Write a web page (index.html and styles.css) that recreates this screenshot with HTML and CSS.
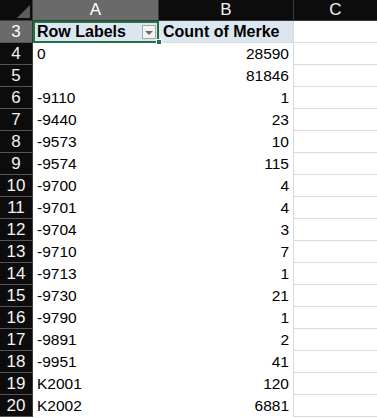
FILE: index.html
```
<!DOCTYPE html>
<html>
<head>
<meta charset="utf-8">
<link rel="stylesheet" href="styles.css">
</head>
<body>
<div class="sheet">
  <div class="corner"><span class="tri"></span></div>
  <div class="colhead sel">A</div>
  <div class="colhead">B</div>
  <div class="colhead last">C</div>

  <div class="rowhead sel">3</div>
  <div class="cell hdr a active">Row Labels<span class="dd"><span class="arrow"></span></span><span class="handle"></span></div>
  <div class="cell hdr b">Count of Merke</div>
  <div class="cell c"></div>

  <div class="rowhead">4</div><div class="cell a">0</div><div class="cell b num">28590</div><div class="cell c"></div>
  <div class="rowhead">5</div><div class="cell a"></div><div class="cell b num">81846</div><div class="cell c"></div>
  <div class="rowhead">6</div><div class="cell a">-9110</div><div class="cell b num">1</div><div class="cell c"></div>
  <div class="rowhead">7</div><div class="cell a">-9440</div><div class="cell b num">23</div><div class="cell c"></div>
  <div class="rowhead">8</div><div class="cell a">-9573</div><div class="cell b num">10</div><div class="cell c"></div>
  <div class="rowhead">9</div><div class="cell a">-9574</div><div class="cell b num">115</div><div class="cell c"></div>
  <div class="rowhead">10</div><div class="cell a">-9700</div><div class="cell b num">4</div><div class="cell c"></div>
  <div class="rowhead">11</div><div class="cell a">-9701</div><div class="cell b num">4</div><div class="cell c"></div>
  <div class="rowhead">12</div><div class="cell a">-9704</div><div class="cell b num">3</div><div class="cell c"></div>
  <div class="rowhead">13</div><div class="cell a">-9710</div><div class="cell b num">7</div><div class="cell c"></div>
  <div class="rowhead">14</div><div class="cell a">-9713</div><div class="cell b num">1</div><div class="cell c"></div>
  <div class="rowhead">15</div><div class="cell a">-9730</div><div class="cell b num">21</div><div class="cell c"></div>
  <div class="rowhead">16</div><div class="cell a">-9790</div><div class="cell b num">1</div><div class="cell c"></div>
  <div class="rowhead">17</div><div class="cell a">-9891</div><div class="cell b num">2</div><div class="cell c"></div>
  <div class="rowhead">18</div><div class="cell a">-9951</div><div class="cell b num">41</div><div class="cell c"></div>
  <div class="rowhead">19</div><div class="cell a">K2001</div><div class="cell b num">120</div><div class="cell c"></div>
  <div class="rowhead">20</div><div class="cell a">K2002</div><div class="cell b num">6881</div><div class="cell c"></div>
</div>
</body>
</html>
```
FILE: styles.css
```
html, body {
  margin: 0;
  padding: 0;
  background: #ffffff;
}
.sheet {
  display: grid;
  grid-template-columns: 33px 126px 135px 1fr;
  grid-template-rows: 21px;
  grid-auto-rows: 22px;
  font-family: "Liberation Sans", Arial, sans-serif;
  font-size: 15.5px;
  color: #000;
  width: 377px;
  overflow: hidden;
}
.sheet > div {
  box-sizing: border-box;
}
.corner {
  background: #0c0c0c;
  border-right: 1px solid #3a3a3a;
  border-bottom: 1px solid #3a3a3a;
  position: relative;
}
.tri {
  position: absolute;
  right: 2px;
  bottom: 2px;
  width: 0;
  height: 0;
  border-left: 13px solid transparent;
  border-bottom: 13px solid #5c5c5c;
}
.colhead {
  background: #0c0c0c;
  color: #f2f2f2;
  border-right: 1px solid #3a3a3a;
  border-bottom: 1px solid #3a3a3a;
  display: flex;
  align-items: center;
  justify-content: center;
  font-size: 17px;
}
.colhead.sel {
  background: #6a6a6a;
  color: #ffffff;
}
.colhead.last {
  border-right: none;
}
.rowhead {
  background: #0c0c0c;
  color: #f2f2f2;
  border-right: 1px solid #3a3a3a;
  border-bottom: 1px solid #555555;
  display: flex;
  align-items: center;
  justify-content: center;
  font-size: 17px;
}
.rowhead.sel {
  background: #6a6a6a;
  color: #ffffff;
}
.cell {
  display: flex;
  align-items: center;
  white-space: nowrap;
  overflow: visible;
  padding: 0 4px;
}
.cell.a {
  justify-content: flex-start;
}
.cell.b {
  border-right: 1px solid #dadada;
}
.cell.num {
  justify-content: flex-end;
}
.cell.c {
  border-bottom: 1px solid #dadada;
}
.cell.hdr {
  background: #dce6f1;
  font-weight: bold;
  font-size: 16px;
  border-bottom: 1px solid #dadada;
}
.cell.hdr.b {
  border-right: 1px solid #dadada;
}
.cell.active {
  position: relative;
  outline: 2px solid #217346;
  outline-offset: -2px;
  z-index: 2;
}
.dd {
  position: absolute;
  right: 3px;
  top: 4px;
  width: 14px;
  height: 14px;
  box-sizing: border-box;
  background: #f3f3f3;
  border: 1px solid #a8a8a8;
  display: flex;
  align-items: center;
  justify-content: center;
}
.arrow {
  width: 0;
  height: 0;
  border-left: 4px solid transparent;
  border-right: 4px solid transparent;
  border-top: 4px solid #6b6b6b;
  margin-top: 1px;
}
.handle {
  position: absolute;
  right: -3px;
  bottom: -3px;
  width: 6px;
  height: 6px;
  background: #217346;
  border: 1px solid #ffffff;
  box-sizing: border-box;
}
```
